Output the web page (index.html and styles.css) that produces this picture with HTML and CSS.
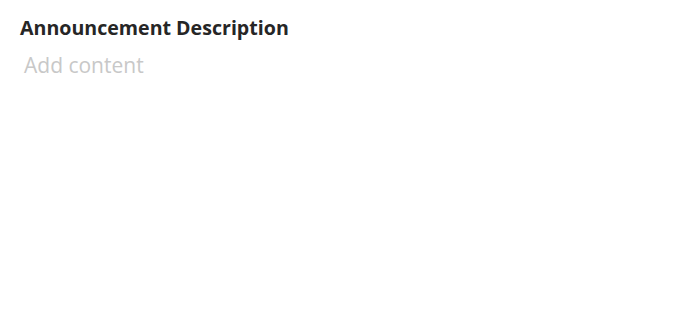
FILE: index.html
```html
<!DOCTYPE html>
<html>
<head>
<meta charset="utf-8">
<link rel="stylesheet" href="styles.css">
</head>
<body>
<div class="field">
  <div class="label">Announcement Description</div>
  <div class="editor" contenteditable="true"><span class="placeholder">Add content</span></div>
</div>
</body>
</html>
```
FILE: styles.css
```css
html, body {
  margin: 0;
  padding: 0;
  background: #ffffff;
  font-family: "Open Sans", "Noto Sans", sans-serif;
}
.field {
  padding: 14px 20px 0 20px;
}
.label {
  font-size: 19.6px;
  font-weight: 700;
  color: #262626;
  line-height: 28px;
}
.editor {
  margin-top: 8px;
  padding-left: 4px;
  font-size: 21px;
  line-height: 30px;
  color: #c8c8c8;
  outline: none;
}
```
